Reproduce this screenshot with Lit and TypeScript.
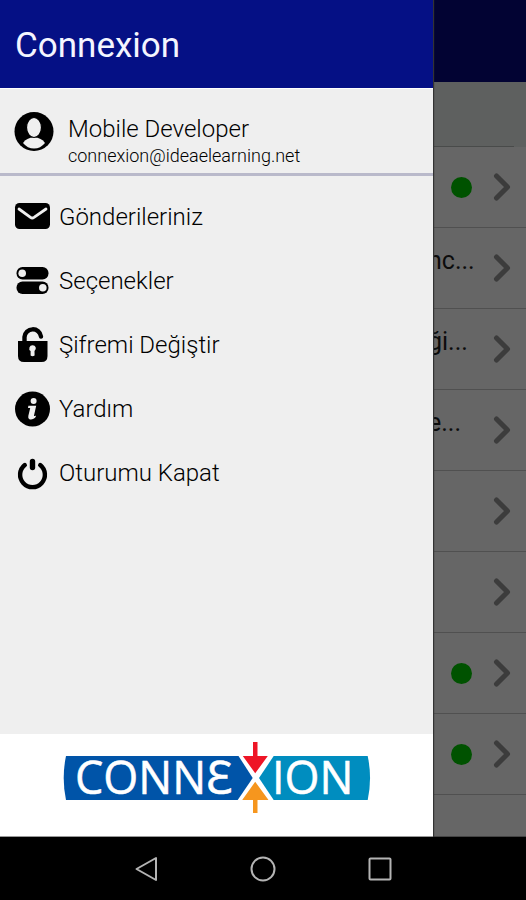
import { LitElement, html, css, svg, nothing } from "lit";
import { customElement, property } from "lit/decorators.js";

const glyphs: Record<string, unknown> = {
  mail: svg`
    <rect x="1" y="4" width="35" height="26" rx="4.5"/>
    <path class="cut" d="M5 10 L16.5 18.4 Q18.2 19.6 20 18.4 L32 10"/>`,
  toggles: svg`
    <rect x="2.5" y="4" width="32" height="12.5" rx="6"/>
    <rect x="2.5" y="18.5" width="32" height="12.5" rx="6"/>
    <circle class="hole" cx="8.2" cy="10.2" r="3.8"/>
    <circle class="hole" cx="28.8" cy="24.7" r="3.8"/>`,
  lock: svg`
    <path d="M4 14 H33.5 V29 Q33.5 35 27.5 35 H10 Q4 35 4 29 Z"/>
    <path class="line" d="M10.5 15 V10 A8.3 8.3 0 0 1 27 9.5"/>
    <path class="hole" d="M18.5 18.2 a3.2 3.2 0 0 1 2 5.8 L20.6 28.5 Q18.5 30 16.6 28.5 L16.6 24 A3.2 3.2 0 0 1 18.5 18.2Z"/>`,
  info: svg`
    <circle cx="18.5" cy="18" r="17.5"/>
    <circle class="hole" cx="19.6" cy="10" r="3"/>
    <path class="hole" d="M14.4 14.8 H22.2 L20 24.4 Q20 25.8 21.8 24.4 Q22.4 25.6 20.8 27 Q18.4 29 15.4 28.2 Q13.8 27.4 14.3 25 L16.2 17 H14 Z"/>`,
  power: svg`
    <path class="line" d="M10.8 10 A12.4 12.4 0 1 0 26.2 10"/>
    <path class="bar" d="M18.5 6.5 V12.5"/>`,
  person: svg`
    <circle cx="20" cy="19.5" r="19.5"/>
    <path class="hole" d="M9 31 Q12.5 25.5 20 25.5 Q27.5 25.5 31 31 Q26.5 36.5 20 36.5 Q13.5 36.5 9 31Z"/>
    <ellipse class="head" cx="20" cy="15.5" rx="7.5" ry="10"/>`,
};

@customElement("app-icon")
export class AppIcon extends LitElement {
  @property() name = "";
  @property({ type: Number }) size = 36;

  static styles = css`
    :host { display: block; flex: none; }
    svg { display: block; fill: #000; }
    .hole { fill: #efefef; }
    .cut { fill: none; stroke: #efefef; stroke-width: 2.8; stroke-linecap: round; }
    .line { fill: none; stroke: #000; stroke-width: 4.4; stroke-linecap: round; }
    .bar { stroke: #000; stroke-width: 5.4; stroke-linecap: round; }
    .head { fill: #efefef; stroke: #000; stroke-width: 1.2; }
  `;

  render() {
    return html`<svg width=${this.size} height=${this.size} viewBox="0 0 ${this.size} ${this.size}" aria-hidden="true">
      ${glyphs[this.name]}
    </svg>`;
  }
}

@customElement("brand-logo")
export class BrandLogo extends LitElement {
  static styles = css`
    :host { display: block; }
    svg { display: block; }
    .word { font: 400 45px "Open Sans", "Noto Sans", sans-serif; fill: #fff; stroke: #fff; stroke-width: 0.5; }
    .left { fill: #0054a8; }
    .right { fill: #008dbf; }
    .down { fill: #ee1526; }
    .up { fill: #f6961e; }
  `;

  render() {
    return html`<svg width="308" height="72" viewBox="0 0 308 72" role="img" aria-label="Connexion">
      <path class="left" d="M3 14 H175.5 L189.7 36 L174.7 58 H3 Q-1.6 36 3 14Z"/>
      <path class="right" d="M304.7 14 H210.7 L196 36 L210.7 58 H304.7 Q309.4 36 304.7 14Z"/>
      <path class="down" d="M190 0 h4.5 v14 h10.3 L192.2 31.3 L179.8 14 h10.2Z"/>
      <path class="up" d="M190 71 h4.5 V58 h11 L192.2 39.7 L179.2 58 h10.8Z"/>
      <text class="word" x="12" y="52">CONNƐ</text>
      <text class="word" x="209" y="52">ION</text>
    </svg>`;
  }
}

interface Row { label?: string; online?: boolean; }

const rows: Row[] = [
  { online: true },
  { label: "nc..." },
  { label: "ği..." },
  { label: "e..." },
  {},
  {},
  { online: true },
  { online: true },
];

const menu = [
  { icon: "mail", label: "Gönderileriniz" },
  { icon: "toggles", label: "Seçenekler" },
  { icon: "lock", label: "Şifremi Değiştir" },
  { icon: "info", label: "Yardım" },
  { icon: "power", label: "Oturumu Kapat" },
];

@customElement("app-root")
export class AppRoot extends LitElement {
  static styles = css`
    :host {
      display: flex;
      flex-direction: column;
      min-height: 100vh;
      font-family: Roboto, "Liberation Sans", sans-serif;
      color: #000;
      background: #000;
    }
    * { box-sizing: border-box; }
    h1, p, ul { margin: 0; padding: 0; }
    ul { list-style: none; }
    a { color: inherit; text-decoration: none; }
    button { padding: 0; border: 0; background: none; }

    .stage {
      flex: 1;
      display: grid;
      grid-template-columns: minmax(0, 1fr) 93px;
      overflow: hidden;
    }
    .page {
      grid-area: 1 / 1 / 2 / 3;
      background: #666;
      border-bottom: 1px solid #444;
    }
    .page-bar { height: 82px; background: #020333; }
    .filter { height: 65px; background: #5e605f; padding-right: 12px; }
    .filter-line { height: 100%; border-bottom: 1px solid #494b4a; }
    .row {
      display: flex;
      align-items: center;
      justify-content: flex-end;
      height: 81px;
      padding-right: 14px;
      border-bottom: 1px solid #505050;
    }
    .row-label {
      width: 64px;
      padding-bottom: 14px;
      font-size: 25px;
      line-height: 32px;
      color: #0c0c0c;
    }
    .dot {
      width: 21px;
      height: 21px;
      margin-right: 20px;
      border-radius: 50%;
      background: #005200;
    }
    .chevron { display: block; fill: none; stroke: #3c3c3c; stroke-width: 5; stroke-linecap: round; stroke-linejoin: round; }

    .drawer {
      grid-area: 1 / 1;
      z-index: 1;
      display: flex;
      flex-direction: column;
      background: #efefef;
      box-shadow: 1px 0 1px #333;
    }
    .title {
      height: 88px;
      padding: 0 15px;
      background: #051085;
      color: #f4f5ff;
      font-size: 35px;
      font-weight: 400;
      line-height: 92px;
    }
    .profile {
      display: flex;
      gap: 14px;
      height: 88px;
      padding: 23px 14px 0;
      border-top: 1px solid #fff;
      border-bottom: 3px solid #b9b9ca;
      font-weight: 300;
    }
    .name { padding-top: 2px; font-size: 24px; line-height: 30px; }
    .email { font-size: 18px; line-height: 24px; }
    .menu { flex: 1; padding: 9px 0; }
    .menu-link {
      display: flex;
      align-items: center;
      gap: 9px;
      height: 64px;
      padding: 0 14px;
      font-size: 24px;
      font-weight: 300;
      line-height: 32px;
    }
    .brand {
      display: flex;
      justify-content: center;
      height: 103px;
      padding-top: 8px;
      background: #fff;
      border-bottom: 1px solid #999;
    }

    .system {
      display: flex;
      align-items: center;
      justify-content: center;
      gap: 81px;
      height: 63px;
      background: #000;
    }
    .key { display: block; fill: none; stroke: #b4b4b4; stroke-width: 2; stroke-linejoin: round; }
  `;

  render() {
    return html`
      <div class="stage">
        <main class="page">
          <div class="page-bar"></div>
          <div class="filter"><div class="filter-line"></div></div>
          <ul>
            ${rows.map(
              (row) => html`<li>
                <a class="row" href="#" aria-label="Aç">
                  ${row.label ? html`<span class="row-label">${row.label}</span>` : nothing}
                  ${row.online ? html`<span class="dot"></span>` : nothing}
                  <svg class="chevron" width="20" height="30" viewBox="0 0 20 30" aria-hidden="true">
                    <path d="M4.5 4 L15.5 15 L4.5 26" />
                  </svg>
                </a>
              </li>`
            )}
          </ul>
        </main>
        <aside class="drawer">
          <h1 class="title">Connexion</h1>
          <section class="profile">
            <app-icon name="person" size="40"></app-icon>
            <div>
              <p class="name">Mobile Developer</p>
              <p class="email">connexion@ideaelearning.net</p>
            </div>
          </section>
          <nav class="menu">
            <ul>
              ${menu.map(
                (item) => html`<li>
                  <a class="menu-link" href="#"><app-icon name=${item.icon}></app-icon>${item.label}</a>
                </li>`
              )}
            </ul>
          </nav>
          <footer class="brand"><brand-logo></brand-logo></footer>
        </aside>
      </div>
      <div class="system">
        <button aria-label="Geri">
          <svg class="key" width="36" height="36" viewBox="0 0 36 36"><path d="M8.5 18 L28 7 V29 Z" /></svg>
        </button>
        <button aria-label="Ana ekran">
          <svg class="key" width="36" height="36" viewBox="0 0 36 36"><circle cx="18" cy="18" r="11.5" /></svg>
        </button>
        <button aria-label="Son uygulamalar">
          <svg class="key" width="36" height="36" viewBox="0 0 36 36"><rect x="7.5" y="7.5" width="21" height="21" rx="1" /></svg>
        </button>
      </div>
    `;
  }
}
